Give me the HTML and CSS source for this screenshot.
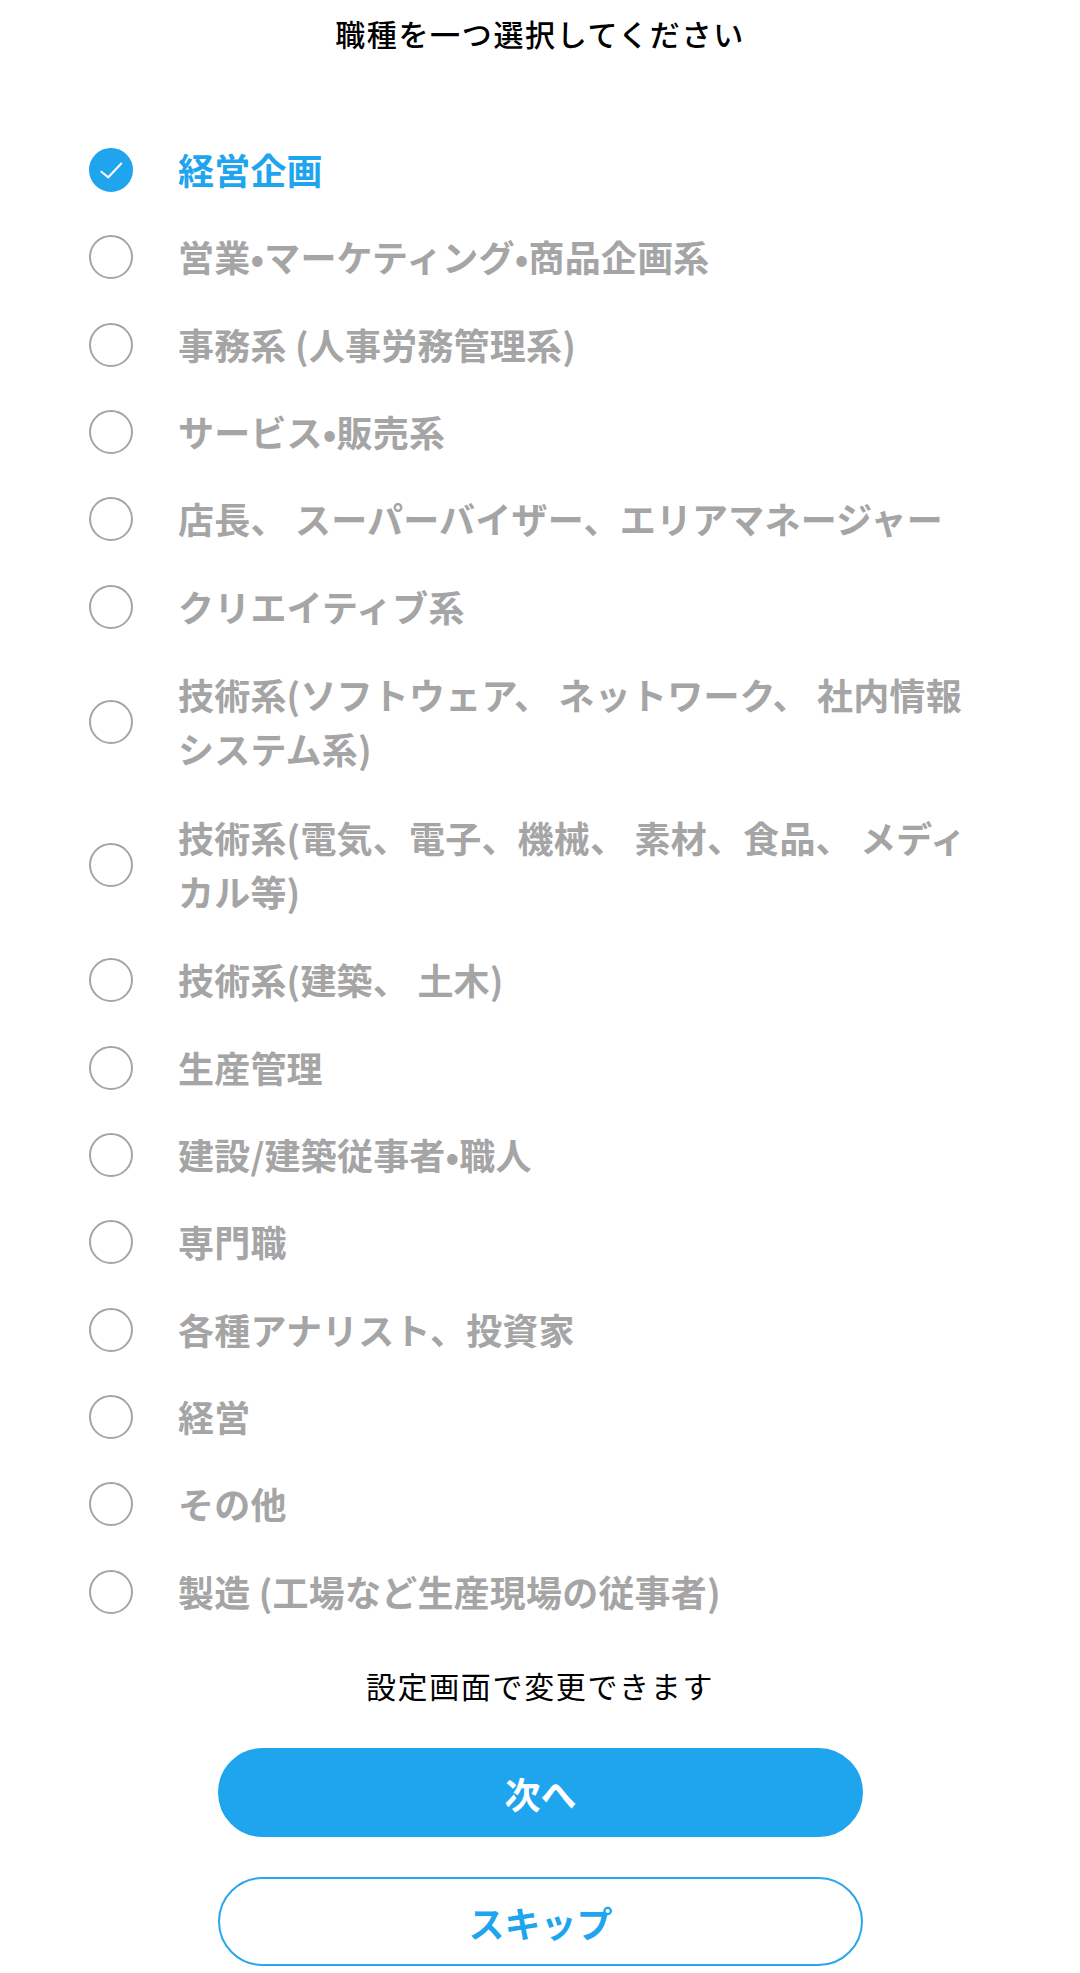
FILE: index.html
```html
<!DOCTYPE html>
<html lang="ja">
<head>
  <meta charset="UTF-8">
  <meta name="viewport" content="width=device-width, initial-scale=1.0">
  <title>職種を選択</title>
  <link rel="stylesheet" href="styles.css">
</head>
<body>
  <div class="container">
    <h1 class="title">職種を一つ選択してください</h1>

    <ul class="job-list">
      <li class="job-item selected">
        <span class="radio">
          <svg viewBox="0 0 44 44" width="44" height="44"><path d="M11.7 23.3 L19.3 29.3 L32.7 15" fill="none" stroke="#fff" stroke-width="2"/></svg>
        </span>
        <span class="job-name">経営企画</span>
      </li>
      <li class="job-item"><span class="radio"></span><span class="job-name">営業•マーケティング•商品企画系</span></li>
      <li class="job-item"><span class="radio"></span><span class="job-name">事務系 (人事労務管理系)</span></li>
      <li class="job-item"><span class="radio"></span><span class="job-name">サービス•販売系</span></li>
      <li class="job-item"><span class="radio"></span><span class="job-name">店長、 スーパーバイザー、エリアマネージャー</span></li>
      <li class="job-item"><span class="radio"></span><span class="job-name">クリエイティブ系</span></li>
      <li class="job-item two-line"><span class="radio"></span><span class="job-name">技術系(ソフトウェア、 ネットワーク、 社内情報システム系)</span></li>
      <li class="job-item two-line"><span class="radio"></span><span class="job-name">技術系(電気、電子、機械、 素材、食品、 メディカル等)</span></li>
      <li class="job-item"><span class="radio"></span><span class="job-name">技術系(建築、 土木)</span></li>
      <li class="job-item"><span class="radio"></span><span class="job-name">生産管理</span></li>
      <li class="job-item"><span class="radio"></span><span class="job-name">建設/建築従事者•職人</span></li>
      <li class="job-item"><span class="radio"></span><span class="job-name">専門職</span></li>
      <li class="job-item"><span class="radio"></span><span class="job-name">各種アナリスト、投資家</span></li>
      <li class="job-item"><span class="radio"></span><span class="job-name">経営</span></li>
      <li class="job-item"><span class="radio"></span><span class="job-name">その他</span></li>
      <li class="job-item"><span class="radio"></span><span class="job-name">製造 (工場など生産現場の従事者)</span></li>
    </ul>

    <p class="note">設定画面で変更できます</p>

    <div class="actions">
      <button class="btn btn-next">次へ</button>
      <button class="btn btn-skip">スキップ</button>
    </div>
  </div>
</body>
</html>
```

FILE: styles.css
```css
body {
  margin: 0;
  padding: 0;
  background: #fff;
  color: #000;
  font-family: "Noto Sans CJK JP", "Noto Sans", sans-serif;
}

.container {
  height: 1973px;
  overflow: hidden;
}

.title {
  margin: 0;
  height: 66px;
  font-size: 30px;
  line-height: 66px;
  font-weight: 500;
  letter-spacing: 1.65px;
  text-align: center;
}

.job-list {
  list-style: none;
  margin: 60.3px 0 0;
  padding: 0 0 0 89px;
}

.job-item {
  display: flex;
  align-items: center;
  gap: 45px;
  padding: 16.68px 0;
  color: #a5a5a5;
}

.job-item.two-line {
  padding: 17.58px 0;
}

.job-item.selected {
  color: #1fa5ee;
}

.radio {
  flex: none;
  width: 44px;
  height: 44px;
  box-sizing: border-box;
  border: 2px solid #a5a5a5;
  border-radius: 50%;
}

.radio svg {
  display: block;
  margin: -2px;
}

.selected .radio {
  background: #1fa5ee;
  border-color: #1fa5ee;
}

.job-name {
  width: 800px;
  margin-top: -1px;
  padding-bottom: 1px;
  font-size: 36px;
  line-height: 54px;
  font-weight: 700;
  letter-spacing: 0.2px;
}

.note {
  margin: 28px 0 0;
  font-size: 30px;
  line-height: 44px;
  letter-spacing: 1.65px;
  text-align: center;
}

.actions {
  display: flex;
  flex-direction: column;
  align-items: center;
  gap: 40px;
  margin-top: 41px;
  padding-left: 1px;
}

.btn {
  width: 645px;
  height: 89px;
  box-sizing: border-box;
  border: 2.5px solid #2ba6ea;
  border-radius: 45px;
  font-family: inherit;
  font-size: 36px;
  font-weight: 700;
  cursor: pointer;
}

.btn-next {
  background: #1fa5ee;
  border-color: #1fa5ee;
  color: #fff;
}

.btn-skip {
  background: #fff;
  color: #1fa5ee;
}
```
